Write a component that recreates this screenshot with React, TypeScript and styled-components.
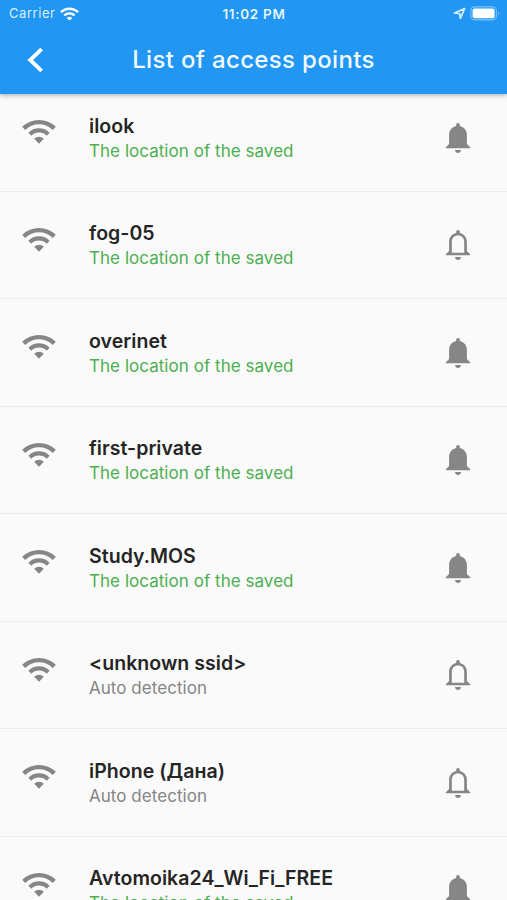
import React from 'react';
import styled, { createGlobalStyle } from 'styled-components';

const GlobalStyle = createGlobalStyle`
  * { box-sizing: border-box; }
  body { margin: 0; background: #fafafa; }
`;

const Screen = styled.div`
  width: 100%;
  height: 900px;
  overflow: hidden;
  display: flex;
  flex-direction: column;
  background: #fafafa;
  font-family: Inter, 'Liberation Sans', sans-serif;
`;

const Header = styled.header`
  flex: none;
  height: 94px;
  background: #2196f3;
  color: #fff;
  box-shadow: 0 1px 5px rgba(0, 0, 0, 0.35);
  z-index: 1;
`;

const StatusBar = styled.div`
  height: 27px;
  display: grid;
  grid-template-columns: 1fr auto 1fr;
  align-items: center;
  padding: 0 6px 0 9px;
`;

const Carrier = styled.div`
  display: flex;
  align-items: center;
  gap: 5px;
  font-size: 13px;
  line-height: 27px;
  letter-spacing: 0.55px;
  color: #d9f0ff;
`;

const Clock = styled.div`
  font-size: 13.5px;
  font-weight: 600;
  letter-spacing: 0.7px;
  margin-right: 2px;
  color: #e4f5ff;
`;

const Indicators = styled.div`
  display: flex;
  justify-content: flex-end;
  align-items: center;
  gap: 4px;
`;

const NavBar = styled.div`
  height: 66px;
  display: grid;
  grid-template-columns: 72px 1fr 72px;
  align-items: center;
`;

const BackButton = styled.button`
  border: 0;
  padding: 0 0 0 26px;
  background: none;
  height: 66px;
  display: flex;
  align-items: center;
`;

const Title = styled.h1`
  margin: 0;
  text-align: center;
  font-size: 24px;
  font-weight: 500;
  line-height: 66px;
  letter-spacing: 0.34px;
  color: #f1faff;
  white-space: nowrap;
`;

const List = styled.ul`
  list-style: none;
  margin: 0;
  padding: 0;
  flex: none;
  margin-top: -10px;
`;

const Row = styled.li`
  height: 107.5px;
  display: grid;
  grid-template-columns: 89px 1fr 62px;
  align-items: start;
  border-bottom: 1px solid #ececec;
`;

const SignalCell = styled.div`
  padding: 35px 0 0 22px;
  svg { display: block; }
`;

const BellCell = styled.div`
  padding-top: 38.7px;
  svg { display: block; }
`;

const Info = styled.div`
  padding-top: 28.9px;
`;

const Name = styled.div`
  font-size: 19.5px;
  font-weight: 600;
  line-height: 26px;
  letter-spacing: 0.05px;
  color: #252525;
  white-space: nowrap;
`;

const Status = styled.div<{ $saved: boolean }>`
  font-size: 17px;
  line-height: 25px;
  letter-spacing: 0.04px;
  color: ${(p) => (p.$saved ? '#4caf50' : '#858585')};
  white-space: nowrap;
`;

const SignalIcon = ({ width = 34, color = '#868686' }: { width?: number; color?: string }) => (
  <svg width={width} height={(width * 25) / 34} viewBox="0 0 34 25" fill="none">
    <path d="M1.7 9.3A22 22 0 0 1 32.3 9.3" stroke={color} strokeWidth="4.4" />
    <path d="M7.8 15.2A13.2 13.2 0 0 1 26.2 15.2" stroke={color} strokeWidth="4.2" />
    <path d="M12.2 19.8A6.8 6.8 0 0 1 21.8 19.8L17 24.8Z" fill={color} />
  </svg>
);

const BellIcon = ({ filled }: { filled: boolean }) => (
  <svg width="26" height="31" viewBox="0 0 26 31">
    <path
      fill="#868686"
      fillRule="evenodd"
      d={
        'M13 0C11.9 0 11.2.8 11.2 1.8V3C6.8 4 4.1 7.4 4.1 12V20.9L.8 24.2V25.3H25.2V24.2L21.9 20.9V12C21.9 7.4 19.2 4 14.8 3V1.8C14.8.8 14.1 0 13 0Z' +
        (filled ? '' : 'M13 5.5C16.9 5.5 19.2 8.2 19.2 12V22.7H6.8V12C6.8 8.2 9.1 5.5 13 5.5Z')
      }
    />
    <path fill="#868686" d="M10 27H16C15.8 28.8 14.6 30 13 30S10.2 28.8 10 27Z" />
  </svg>
);

const points = [
  { name: 'ilook', saved: true, alert: true },
  { name: 'fog-05', saved: true, alert: false },
  { name: 'overinet', saved: true, alert: true },
  { name: 'first-private', saved: true, alert: true },
  { name: 'Study.MOS', saved: true, alert: true },
  { name: '<unknown ssid>', saved: false, alert: false },
  { name: 'iPhone (Дана)', saved: false, alert: false },
  { name: 'Avtomoika24_Wi_Fi_FREE', saved: true, alert: true },
];

export default function App() {
  return (
    <Screen>
      <GlobalStyle />
      <Header>
        <StatusBar>
          <Carrier>
            Carrier
            <SignalIcon width={19} color="#fff" />
          </Carrier>
          <Clock>11:02 PM</Clock>
          <Indicators>
            <svg width="13" height="13" viewBox="0 0 13 13" fill="none">
              <path d="M1.4 6 11.6 1.6 7.4 11.4 6.6 6.6Z" stroke="#d4efff" strokeWidth="1.7" strokeLinejoin="round" />
            </svg>
            <svg width="31" height="15" viewBox="0 0 31 15">
              <rect x="0.9" y="0.9" width="25.5" height="13" rx="3.8" fill="none" stroke="#7dc2f8" strokeWidth="1.1" />
              <rect x="2.6" y="2.6" width="22" height="9.6" rx="2" fill="#fff" />
              <path d="M28 5.2Q30 7.4 28 9.6Z" fill="#7dc2f8" />
            </svg>
          </Indicators>
        </StatusBar>
        <NavBar>
          <BackButton aria-label="Back">
            <svg width="18" height="26" viewBox="0 0 18 26" fill="none">
              <path d="M15.6 2.2 4.2 13 15.6 23.8" stroke="#fff" strokeWidth="3.8" />
            </svg>
          </BackButton>
          <Title>List of access points</Title>
        </NavBar>
      </Header>
      <List>
        {points.map((p) => (
          <Row key={p.name}>
            <SignalCell>
              <SignalIcon />
            </SignalCell>
            <Info>
              <Name>{p.name}</Name>
              <Status $saved={p.saved}>{p.saved ? 'The location of the saved' : 'Auto detection'}</Status>
            </Info>
            <BellCell>
              <BellIcon filled={p.alert} />
            </BellCell>
          </Row>
        ))}
      </List>
    </Screen>
  );
}
